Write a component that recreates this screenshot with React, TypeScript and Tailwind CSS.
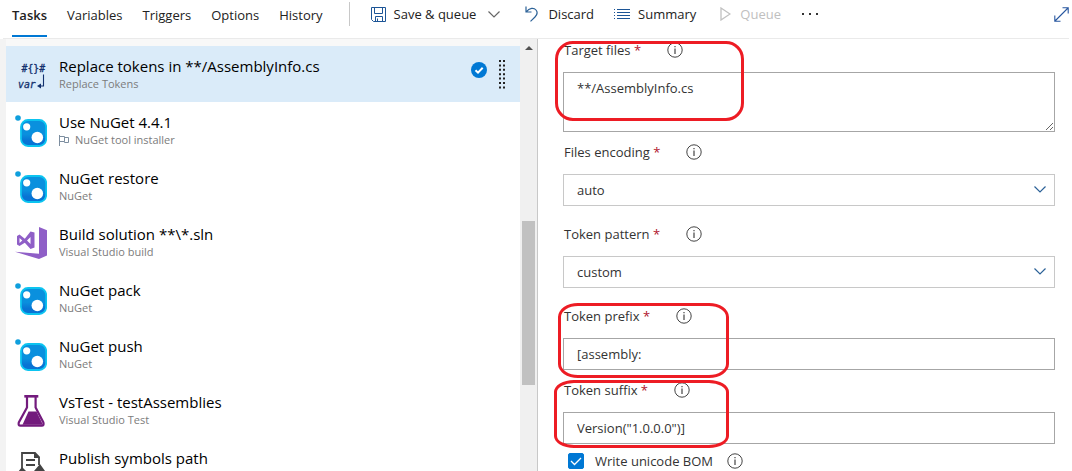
import React from "react";

const tabs = ["Tasks", "Variables", "Triggers", "Options", "History"];

function TokensIcon() {
  return (
    <svg viewBox="0 0 32 32" className="size-8" fill="#12306e" aria-hidden="true">
      <text x="6.500" y="13" fontSize="9.800" stroke="#12306e" strokeWidth="0.300" fontFamily="DejaVu Sans Mono, monospace">#{"{}"}#</text>
      <text x="3" y="29" fontSize="9.800" fontStyle="italic" stroke="#12306e" strokeWidth="0.300" fontFamily="DejaVu Sans Mono, monospace">var</text>
      <path d="M28.500 15.500V27H25" fill="none" stroke="#12306e" strokeWidth="1.100" />
      <path d="M22 27l4-2.500v5z" />
    </svg>
  );
}

function NugetIcon() {
  return (
    <svg viewBox="0 0 32 32" className="size-8" aria-hidden="true">
      <defs>
        <linearGradient id="nuget" x1="0" y1="0" x2="0" y2="1">
          <stop offset="0.550" stopColor="#0a90de" />
          <stop offset="0.800" stopColor="#0873d4" />
        </linearGradient>
      </defs>
      <circle cx="3" cy="3" r="2.800" fill="#0f9fdd" />
      <rect x="6" y="5" width="25.200" height="26" rx="7" fill="url(#nuget)" stroke="#0cc4f0" strokeWidth="1.800" />
      <circle cx="11.700" cy="11.800" r="3.600" fill="#fff" />
      <circle cx="22.300" cy="22.500" r="5.800" fill="#fff" />
    </svg>
  );
}

function VisualStudioIcon() {
  return (
    <svg viewBox="0 0 32 32" className="size-8" fill="#8f5fc7" aria-hidden="true">
      <path d="M24 0l8 3.300V28.500L24 32 0 24.800l24 2z" />
      <path
        fillRule="evenodd"
        d="M2 9l2.500-1.500 5.300 4.200L15.500 4.500 19.500 5.500v15l-4 1.500-5.700-6.200L4.500 19 2 17.500zM4.500 11v5l2.800-2.400zM15.500 10l-3.500 3.600 3.500 3.500z"
      />
    </svg>
  );
}

function FlaskIcon() {
  return (
    <svg viewBox="0 0 32 32" className="size-8" aria-hidden="true">
      <path d="M9.300 0h14v2.600h-14z" fill="#731b7d" />
      <path d="M12 2v10.500L3.800 27.500Q3 30.700 5.500 30.700h21.200q2.500 0 1.700-3.200L20.600 12.500V2" fill="none" stroke="#731b7d" strokeWidth="2.200" />
      <path d="M13.500 16.500h8l6.500 13.300H7.500z" fill="#731b7d" />
    </svg>
  );
}

function SymbolsIcon() {
  return (
    <svg viewBox="0 0 32 32" className="size-8" fill="none" stroke="#444" strokeWidth="1.800" aria-hidden="true">
      <path d="M7 17V2h13l4 4v8" />
      <path d="M19 1v6h6z" fill="#444" stroke="none" />
      <path d="M11 9h9M11 14h9" />
      <path d="M7 16l5 5H3zM25 13l5 7H19z" fill="#444" stroke="none" />
    </svg>
  );
}

type Task = { title: string; sub?: string; icon: () => React.JSX.Element; flag?: boolean; selected?: boolean };

const tasks: Task[] = [
  { title: "Replace tokens in **/AssemblyInfo.cs", sub: "Replace Tokens", icon: TokensIcon, selected: true },
  { title: "Use NuGet 4.4.1", sub: "NuGet tool installer", icon: NugetIcon, flag: true },
  { title: "NuGet restore", sub: "NuGet", icon: NugetIcon },
  { title: "Build solution **\\*.sln", sub: "Visual Studio build", icon: VisualStudioIcon },
  { title: "NuGet pack", sub: "NuGet", icon: NugetIcon },
  { title: "NuGet push", sub: "NuGet", icon: NugetIcon },
  { title: "VsTest - testAssemblies", sub: "Visual Studio Test", icon: FlaskIcon },
  { title: "Publish symbols path", icon: SymbolsIcon },
];

function Chevron({ className }: { className: string }) {
  return (
    <svg viewBox="0 0 12 7" className={className} fill="none" stroke="currentColor" aria-hidden="true">
      <path d="M.5.5L6 6 11.500.5" strokeWidth="1.200" />
    </svg>
  );
}

function Info() {
  return (
    <button type="button" aria-label="More information" className="shrink-0">
      <svg viewBox="0 0 16 16" className="size-4" fill="none" stroke="#444" aria-hidden="true">
        <circle cx="8" cy="8" r="7.200" />
        <path d="M8 6.500V12M8 4v1.300" strokeWidth="1.200" />
      </svg>
    </button>
  );
}

function Label({ id, children }: { id: string; children: string }) {
  return (
    <div className="mb-3 flex h-5 items-center gap-[26px] pl-px">
      <label htmlFor={id} className="whitespace-nowrap">
        {children} <span className="text-[#b0142b]">*</span>
      </label>
      <Info />
    </div>
  );
}

function Dropdown({ id, value, options }: { id: string; value: string; options: string[] }) {
  return (
    <div className="relative">
      <select id={id} defaultValue={value} className="block h-8 w-full appearance-none border border-[#c8c8c8] bg-white px-[13px] outline-none">
        {options.map((o) => (
          <option key={o}>{o}</option>
        ))}
      </select>
      <Chevron className="pointer-events-none absolute top-3 right-[9px] h-[7px] w-3 text-[#2b6197]" />
    </div>
  );
}

const inputClass = "block h-8 w-full border border-[#a6a6a6] bg-white px-[13px] outline-none";

export default function App() {
  return (
    <div className="flex h-screen flex-col overflow-hidden bg-white font-['Open_Sans','Noto_Sans',sans-serif] text-[13px] leading-5 text-[#333]">
      <header className="mx-[3px] flex h-[39px] shrink-0 items-start border-b border-[#eaeaea]">
        <nav className="flex gap-3 pl-[5px]">
          {tabs.map((t, i) => (
            <a
              key={t}
              href="#"
              className={
                i === 0
                  ? "mx-1 flex h-[37px] items-start border-b-2 border-[#0078d4] pt-[5px] font-semibold text-[#222]"
                  : "flex h-[37px] items-start px-1 pt-[5px] text-[#222]"
              }
            >
              {t}
            </a>
          ))}
        </nav>
        <div className="mt-[2px] ml-[22px] h-6 w-px bg-[#c8c8c8]" />
        <div className="flex h-7 flex-1 items-center pl-[21px] text-[#222]">
          <button type="button" className="flex items-center">
            <svg viewBox="0 0 15 15" className="size-[15px]" fill="none" stroke="#1c5596" aria-hidden="true">
              <path d="M.5.5h14v14H2.500l-2-2zM3.500.5v6h8v-6M4.500 14.500v-5h7v5M6.500 11.500v3" />
            </svg>
            <span className="mr-3 ml-2">Save &amp; queue</span>
            <Chevron className="h-[7px] w-3 text-[#666]" />
          </button>
          <button type="button" className="ml-[25px] flex items-center gap-[10px]">
            <svg viewBox="0 0 13 16" className="h-4 w-[13px]" fill="none" stroke="#2b6197" strokeWidth="1.200" aria-hidden="true">
              <path d="M1 .5v5.500h5.500M1.200 5.800C4.500 1.500 9 1.500 11 4c2 2.500 1 5-1 7L5.500 15.400" />
            </svg>
            Discard
          </button>
          <button type="button" className="ml-5 flex items-center gap-2">
            <svg viewBox="0 0 16 12" className="h-3 w-4" stroke="#1c5596" aria-hidden="true">
              <path d="M3 1.500h13M3 4.500h13M3 7.500h13M3 10.500h13M0 1.500h1M0 4.500h1M0 7.500h1M0 10.500h1" />
            </svg>
            Summary
          </button>
          <button type="button" disabled className="ml-6 flex items-center gap-[9px] text-[#c0c0c0]">
            <svg viewBox="0 0 11 14" className="h-[14px] w-[11px]" fill="none" stroke="#c0c0c0" strokeWidth="1.300" aria-hidden="true">
              <path d="M1 1l9 6-9 6z" />
            </svg>
            Queue
          </button>
          <button type="button" aria-label="More actions" className="ml-5">
            <svg viewBox="0 0 18 4" className="h-1 w-[18px]" fill="#333" aria-hidden="true">
              <path d="M1 1h2v2H1zM8 1h2v2H8zM15 1h2v2h-2z" />
            </svg>
          </button>
          <button type="button" aria-label="Full screen" className="ml-auto">
            <svg viewBox="0 0 15 15" className="size-[15px]" fill="none" stroke="#2857a0" strokeWidth="1.100" aria-hidden="true">
              <path d="M1 14L14 1M8.500.8h5.700v5.700M.8 8.500v5.700h5.700" />
            </svg>
          </button>
        </div>
      </header>

      <main className="flex min-h-0 flex-1">
        <section className="flex w-1/2 shrink-0 border-r border-[#c8c8c8] bg-[#f3f3f3] pl-[6px] min-[1000px]:w-[538px]">
          <ul className="min-w-0 flex-1 overflow-hidden bg-white">
            <li className="h-[7px] bg-[#f8f8f8]" />
            {tasks.map(({ icon: Icon, ...t }) => (
              <li key={t.title} className={t.selected ? "flex h-14 items-center bg-[#daebf9] pr-[14px]" : "flex h-14 items-center bg-white pr-[14px]"}>
                <a href="#" className="flex min-w-0 flex-1 items-center gap-3 pl-[9px]">
                  <span className="shrink-0 pt-[2px]">
                    <Icon />
                  </span>
                  <span className="flex flex-col">
                    <span className="text-[15px] leading-5 text-black">{t.title}</span>
                    <span className="flex h-4 items-center gap-[6px] text-[11px] leading-4 text-[#7c7c7c]">
                      {t.flag && (
                        <svg viewBox="0 0 10 11" className="h-[11px] w-[10px]" fill="none" stroke="#7d8ea0" aria-hidden="true">
                          <path d="M.5 0v11M.5 1.500h5v5h-5M5.500 2.500h4v5h-4v-1" />
                        </svg>
                      )}
                      {t.sub}
                    </span>
                  </span>
                </a>
                {t.selected && (
                  <span className="flex items-center gap-[11px]">
                    <svg viewBox="0 0 16 16" className="mb-2 size-4" aria-hidden="true">
                      <circle cx="8" cy="8" r="8" fill="#0078d4" />
                      <path d="M4.500 8.300l2.500 2.400 4.700-4.900" fill="none" stroke="#fff" strokeWidth="2" />
                    </svg>
                    <svg viewBox="0 0 8 29" className="h-[29px] w-2" stroke="#222" strokeWidth="2" strokeDasharray="2 2.400" aria-hidden="true">
                      <path d="M2 0v29M6 0v29" />
                    </svg>
                  </span>
                )}
              </li>
            ))}
          </ul>
          <div className="flex w-[17px] flex-col items-center bg-[#f0f0f0] pt-[7px]">
            <svg viewBox="0 0 8 4" className="h-1 w-2" fill="#505050" aria-hidden="true">
              <path d="M4 0l4 4H0z" />
            </svg>
            <div className="mt-[171px] h-[164px] w-[13px] bg-[#c1c1c1]" />
          </div>
        </section>

        <form className="relative min-w-0 flex-1 pt-px pr-[17px] pl-[25px]">
          <Label id="files">Target files</Label>
          <textarea id="files" defaultValue="**/AssemblyInfo.cs" className="block h-[60px] w-full resize-y border border-[#a6a6a6] px-[13px] py-[5px] outline-none" />
          <div className="mt-[10px]">
            <Label id="encoding">Files encoding</Label>
            <Dropdown id="encoding" value="auto" options={["auto", "ascii", "utf-8"]} />
          </div>
          <div className="mt-[18px]">
            <Label id="pattern">Token pattern</Label>
            <Dropdown id="pattern" value="custom" options={["custom", "default"]} />
          </div>
          <div className="mt-[18px]">
            <Label id="prefix">Token prefix</Label>
            <input id="prefix" type="text" defaultValue="[assembly:" className={inputClass} />
          </div>
          <div className="mt-[10px]">
            <Label id="suffix">Token suffix</Label>
            <input id="suffix" type="text" defaultValue={'Version("1.0.0.0")]'} className={inputClass} />
          </div>
          <div className="mt-[7px] flex h-5 items-center pl-[5px]">
            <span className="relative flex">
              <input id="bom" type="checkbox" defaultChecked className="peer size-4 appearance-none rounded-[2px] border border-[#0078d4] checked:bg-[#0078d4]" />
              <svg viewBox="0 0 16 16" className="pointer-events-none absolute inset-0 hidden size-4 peer-checked:block" fill="none" stroke="#fff" strokeWidth="1.300" aria-hidden="true">
                <path d="M3 8l3.500 3.500L13 5" />
              </svg>
            </span>
            <label htmlFor="bom" className="ml-[11px]">
              Write unicode BOM
            </label>
            <span className="ml-[14px] flex">
              <Info />
            </span>
          </div>

          <div className="pointer-events-none absolute top-[2px] left-[17px] h-[80px] w-[189px] rounded-[18px] border-3 border-[#ed1c24]" />
          <div className="pointer-events-none absolute top-[264px] left-5 h-[75px] w-[171px] rounded-[20px/14px] border-3 border-[#ed1c24]" />
          <div className="pointer-events-none absolute top-[341px] left-4 h-[68px] w-[175px] rounded-[20px/12px] border-3 border-[#ed1c24]" />
        </form>
      </main>
    </div>
  );
}
